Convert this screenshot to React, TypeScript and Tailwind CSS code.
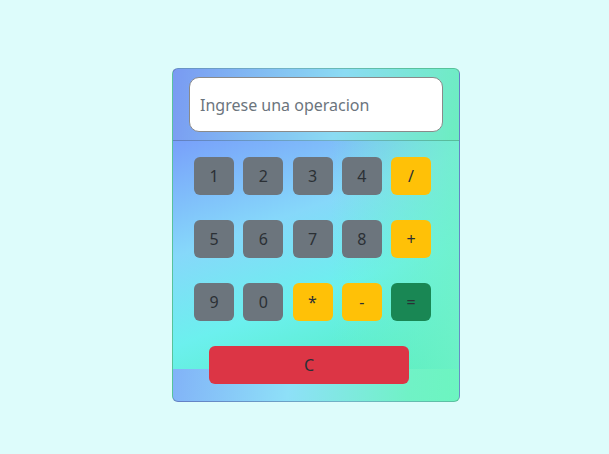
import React from "react";

const keys: { label: string; color: "gray" | "yellow" | "green" }[] = [
  { label: "1", color: "gray" },
  { label: "2", color: "gray" },
  { label: "3", color: "gray" },
  { label: "4", color: "gray" },
  { label: "/", color: "yellow" },
  { label: "5", color: "gray" },
  { label: "6", color: "gray" },
  { label: "7", color: "gray" },
  { label: "8", color: "gray" },
  { label: "+", color: "yellow" },
  { label: "9", color: "gray" },
  { label: "0", color: "gray" },
  { label: "*", color: "yellow" },
  { label: "-", color: "yellow" },
  { label: "=", color: "green" },
];

const colorClass = {
  gray: "bg-[#6c757d]",
  yellow: "bg-[#ffc107]",
  green: "bg-[#198754]",
};

export default function App() {
  return (
    <div
      className="min-h-[454px] w-full bg-[#ddfcfb] pl-[172px] pt-[68px]"
      style={{ fontFamily: '"Noto Sans", "Open Sans", sans-serif' }}
    >
      <div className="flex h-[334px] w-[288px] flex-col rounded-[6px] border border-black/20 bg-[linear-gradient(100deg,#7c9ef7_0%,#8ee0f8_50%,#70f2c6_85%,#6cf5c0_100%)]">
        <div className="border-b border-black/20 bg-black/[0.02] px-4 py-2">
          <input
            placeholder="Ingrese una operacion"
            className="h-[55px] w-full rounded-[10px] border border-[#8a8a8a] bg-white px-[10px] text-base text-[#212529] placeholder:text-[#6c757d] outline-none"
          />
        </div>
        <div className="h-[228px] bg-[linear-gradient(to_right,rgba(112,240,200,0)_55%,rgba(112,242,200,0.85)_100%),linear-gradient(160deg,#78a0fa_0%,#86d8fa_35%,#6cf0ee_62%,#50ecb8_100%)] pl-[21px] pt-4">
          <div className="grid w-[237px] grid-cols-[repeat(5,40px)] gap-x-[9.25px] gap-y-[25px]">
            {keys.map((k) => (
              <button
                key={k.label}
                className={`flex h-[38px] w-[40px] items-center justify-center rounded-[6px] text-base text-[#2b3035] ${colorClass[k.color]}`}
              >
                {k.label}
              </button>
            ))}
          </div>
          <button className="mt-[25px] ml-[15px] flex h-[38px] w-[200px] items-center justify-center rounded-[6px] bg-[#dc3545] text-base text-[#2b3035]">
            C
          </button>
        </div>
        <div className="flex-1" />
      </div>
    </div>
  );
}
